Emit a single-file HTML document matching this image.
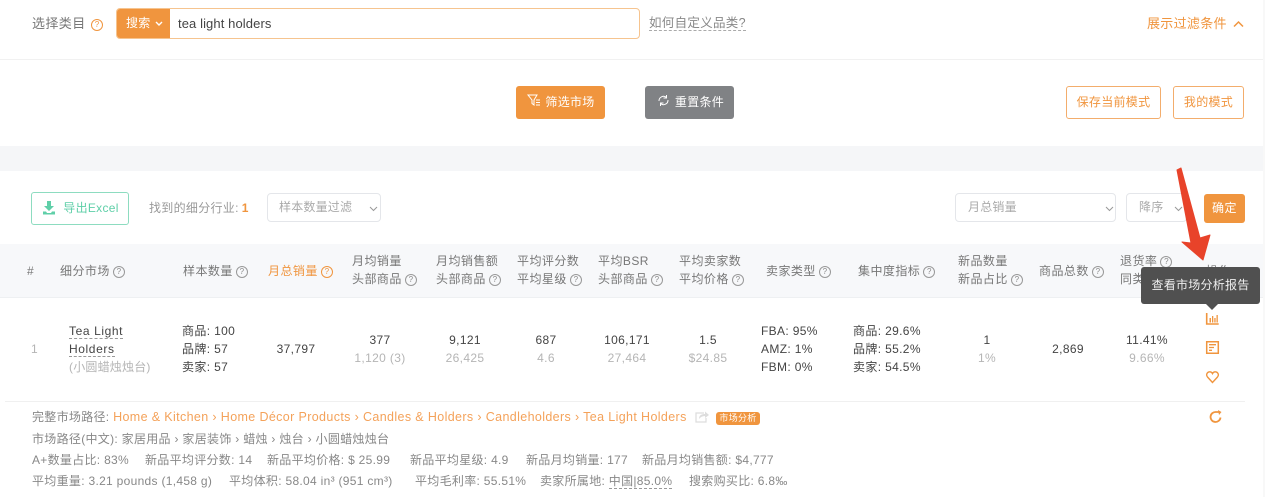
<!DOCTYPE html>
<html lang="zh"><head><meta charset="utf-8"><title>市场</title>
<style>
html,body{margin:0;padding:0;background:#fff}
#p{position:relative;width:1265px;height:497px;overflow:hidden;background:#fff;font-family:"Liberation Sans","Noto Sans CJK SC",sans-serif;font-size:12px;color:#666;filter:blur(.35px)}
#p div,#p span.a{position:absolute;white-space:nowrap;box-sizing:border-box}
.t{line-height:18px;height:18px}
.c{text-align:center;transform:translateX(-50%)}
.h{color:#777;letter-spacing:.45px}
.d{color:#444;letter-spacing:.35px}
.g{color:#b5b5b5;letter-spacing:.35px}
.m{color:#888;letter-spacing:.3px}
.o{color:#f0953e}
.q{display:inline-block;width:10px;height:10px;border:1px solid #999;border-radius:50%;font-size:8px;line-height:10px;text-align:center;color:#888;margin-left:3px;vertical-align:1px;letter-spacing:0;box-sizing:content-box}
.q.y{border-color:#f0953e;color:#f0953e}
.btn{border-radius:3px;text-align:center}
.sel{border:1px solid #e4e6ea;border-radius:4px;height:29px;line-height:27px;color:#aaa;background:#fff;padding-left:12px;letter-spacing:.2px}
.dash{border-bottom:1px dashed #999}
svg{position:absolute;overflow:visible}
</style></head><body><div id="p">
<div style="left:0;top:59px;width:1263px;height:1px;background:#f1f1f1"></div>
<div style="left:1263px;top:0;width:2px;height:497px;background:#f8f8f8"></div>
<div style="left:0;top:146px;width:1263px;height:25px;background:#f5f6f8"></div>
<div style="left:0;top:244px;width:1263px;height:54px;background:#f7f8fa;border-bottom:1px solid #eef0f2"></div>
<div style="left:5px;top:401px;width:1240px;height:1px;background:#f0f0f0"></div>

<div class="t" style="left:32px;top:15px;color:#777;font-size:13px;letter-spacing:.4px">选择类目</div>
<div class="t" style="left:91px;top:15px"><span class="q y" style="margin:0">?</span></div>
<div style="left:116px;top:8px;width:524px;height:31px;border:1px solid #f6c48f;border-radius:4px;background:#fff"></div>
<div style="left:117px;top:9px;width:53px;height:29px;background:#f0953e;border-radius:3px 0 0 3px;color:#fff;line-height:28px;padding-left:9px;font-size:12px;letter-spacing:.3px">搜索</div>
<svg style="left:155px;top:21px" width="8" height="6"><path d="M1 1l3 3 3-3" fill="none" stroke="#fff" stroke-width="1.4"/></svg>
<div class="t" style="left:178px;top:15px;color:#444;font-size:13px;letter-spacing:.1px">tea light holders</div>
<div style="left:649px;top:15px;height:16px;line-height:16px;color:#888;font-size:12.5px;letter-spacing:.3px;border-bottom:1px dashed #aaa">如何自定义品类?</div>
<div class="t o" style="left:1147px;top:15px;font-size:13px;letter-spacing:.3px">展示过滤条件</div>
<svg style="left:1233px;top:20px" width="11" height="8"><path d="M1 6.500l4.500-4.500 4.500 4.500" fill="none" stroke="#f0953e" stroke-width="1.5"/></svg>

<div class="btn" style="left:516px;top:86px;width:89px;height:33px;background:#f0953e;color:#fff;line-height:32px;padding-left:19px;font-size:12px;letter-spacing:.3px">筛选市场</div>
<svg style="left:527px;top:94px" width="15" height="13"><path d="M1 1h9L7 6v5L5 9.500V6zM9 6h4M9 8.500h4M9 11h4" fill="none" stroke="#fff" stroke-width="1"/></svg>
<div class="btn" style="left:645px;top:86px;width:89px;height:33px;background:#808285;color:#fff;line-height:32px;padding-left:20px;font-size:12px;letter-spacing:.3px">重置条件</div>
<svg style="left:657px;top:94px" width="13" height="13"><path d="M2 7a4.500 4.500 0 0 1 7.500-3.500M11 6a4.500 4.500 0 0 1-7.500 3.500M9.500 1v3h-3M3.500 12V9h3" fill="none" stroke="#fff" stroke-width="1"/></svg>
<div class="btn o" style="left:1066px;top:86px;width:95px;height:33px;border:1px solid #f3ad6c;line-height:31px;letter-spacing:.3px">保存当前模式</div>
<div class="btn o" style="left:1173px;top:86px;width:71px;height:33px;border:1px solid #f3ad6c;line-height:31px;letter-spacing:.3px">我的模式</div>

<div class="btn" style="left:31px;top:192px;width:98px;height:33px;border:1px solid #8ddcc0;color:#5fcfa8;line-height:31px;padding-left:22px;letter-spacing:.3px">导出Excel</div>
<svg style="left:42px;top:201px" width="14" height="14"><path d="M5 0h4v5h3L7 10 2 5h3zM1 10.500v3h12v-3h-3l-1 1.500H5l-1-1.500z" fill="#5fcfa8"/></svg>
<div class="t" style="left:149px;top:199px;color:#999;letter-spacing:.3px">找到的细分行业:<span class="o" style="font-weight:bold;margin-left:3px">1</span></div>
<div class="sel" style="left:267px;top:193px;width:114px;padding-left:11px">样本数量过滤</div>
<svg style="left:369px;top:206px" width="9" height="6"><path d="M1 1l3.500 3.500L8 1" fill="none" stroke="#999"/></svg>
<div class="sel" style="left:955px;top:193px;width:161px">月总销量</div>
<svg style="left:1105px;top:206px" width="9" height="6"><path d="M1 1l3.500 3.500L8 1" fill="none" stroke="#999"/></svg>
<div class="sel" style="left:1126px;top:193px;width:61px">降序</div>
<svg style="left:1174px;top:206px" width="9" height="6"><path d="M1 1l3.500 3.500L8 1" fill="none" stroke="#999"/></svg>
<div class="btn" style="left:1204px;top:194px;width:41px;height:29px;background:#f0953e;color:#fff;line-height:28px;letter-spacing:.5px">确定</div>

<!-- header -->
<div class="t h" style="left:27px;top:262px">#</div>
<div class="t h" style="left:60px;top:262px">细分市场<span class="q">?</span></div>
<div class="t h" style="left:183px;top:262px">样本数量<span class="q">?</span></div>
<div class="t o" style="left:268px;top:262px;letter-spacing:.45px">月总销量<span class="q y">?</span></div>
<div class="t h" style="left:352px;top:252px">月均销量</div>
<div class="t h" style="left:352px;top:270px">头部商品<span class="q">?</span></div>
<div class="t h" style="left:436px;top:252px">月均销售额</div>
<div class="t h" style="left:436px;top:270px">头部商品<span class="q">?</span></div>
<div class="t h" style="left:517px;top:252px">平均评分数</div>
<div class="t h" style="left:517px;top:270px">平均星级<span class="q">?</span></div>
<div class="t h" style="left:598px;top:252px">平均BSR</div>
<div class="t h" style="left:598px;top:270px">头部商品<span class="q">?</span></div>
<div class="t h" style="left:679px;top:252px">平均卖家数</div>
<div class="t h" style="left:679px;top:270px">平均价格<span class="q">?</span></div>
<div class="t h" style="left:766px;top:262px">卖家类型<span class="q">?</span></div>
<div class="t h" style="left:858px;top:262px">集中度指标<span class="q">?</span></div>
<div class="t h" style="left:958px;top:252px">新品数量</div>
<div class="t h" style="left:958px;top:270px">新品占比<span class="q">?</span></div>
<div class="t h" style="left:1039px;top:262px">商品总数<span class="q">?</span></div>
<div class="t h" style="left:1120px;top:252px">退货率<span class="q">?</span></div>
<div class="t h" style="left:1120px;top:270px">同类目均值</div>
<div class="t h" style="left:1206px;top:262px">操作</div>

<!-- row -->
<div class="t g" style="left:31px;top:340px">1</div>
<div class="d" style="left:69px;top:323px;height:16px;line-height:16px;border-bottom:1px dashed #999;font-size:12px;letter-spacing:.6px">Tea Light</div>
<div class="d" style="left:69px;top:341px;height:16px;line-height:16px;border-bottom:1px dashed #999;font-size:12px;letter-spacing:.6px">Holders</div>
<div class="t g" style="left:69px;top:358px;letter-spacing:.2px">(小圆蜡烛烛台)</div>
<div class="t d" style="left:182px;top:322px">商品: 100</div>
<div class="t d" style="left:182px;top:340px">品牌: 57</div>
<div class="t d" style="left:182px;top:358px">卖家: 57</div>
<div class="t d c" style="left:296px;top:340px">37,797</div>
<div class="t d c" style="left:380px;top:331px">377</div>
<div class="t g c" style="left:380px;top:349px">1,120 (3)</div>
<div class="t d c" style="left:465px;top:331px">9,121</div>
<div class="t g c" style="left:465px;top:349px">26,425</div>
<div class="t d c" style="left:546px;top:331px">687</div>
<div class="t g c" style="left:546px;top:349px">4.6</div>
<div class="t d c" style="left:627px;top:331px">106,171</div>
<div class="t g c" style="left:627px;top:349px">27,464</div>
<div class="t d c" style="left:708px;top:331px">1.5</div>
<div class="t g c" style="left:708px;top:349px">$24.85</div>
<div class="t d" style="left:761px;top:322px">FBA: 95%</div>
<div class="t d" style="left:761px;top:340px">AMZ: 1%</div>
<div class="t d" style="left:761px;top:358px">FBM: 0%</div>
<div class="t d" style="left:853px;top:322px">商品: 29.6%</div>
<div class="t d" style="left:853px;top:340px">品牌: 55.2%</div>
<div class="t d" style="left:853px;top:358px">卖家: 54.5%</div>
<div class="t d c" style="left:987px;top:331px">1</div>
<div class="t g c" style="left:987px;top:349px">1%</div>
<div class="t d c" style="left:1068px;top:340px">2,869</div>
<div class="t d c" style="left:1147px;top:331px">11.41%</div>
<div class="t g c" style="left:1147px;top:349px">9.66%</div>

<!-- action icons -->
<svg style="left:1206px;top:312px" width="13" height="13"><path d="M.7 1v11h12" fill="none" stroke="#f0953e" stroke-width="1.600"/><path d="M3.500 6h1.500v4.500H3.500zM6 4h1.300v6.500H6zM8.300 6h1.300v4.500H8.300zM10.500 3h1.300v7.500h-1.300z" fill="#f0953e"/></svg>
<svg style="left:1206px;top:341px" width="13" height="13"><path d="M.7.700h11.600v11.600H.7z" fill="none" stroke="#f0953e" stroke-width="1.500"/><path d="M3 3.700h7M3 6.500h5M3 9.300h3" stroke="#f0953e" stroke-width="1.300"/></svg>
<svg style="left:1206px;top:371px" width="13" height="12"><path d="M6.500 11.500L1.500 6C-.5 3.500 1.500.800 3.700.800c1.300 0 2.300.7 2.800 1.700.5-1 1.500-1.700 2.800-1.700 2.200 0 4.200 2.700 2.200 5.200z" fill="none" stroke="#f0953e" stroke-width="1.400"/></svg>
<svg style="left:1209px;top:410px" width="14" height="14"><path d="M11.500 7.500A5 5 0 1 1 7 2h4" fill="none" stroke="#f0953e" stroke-width="1.800"/><path d="M9 0l3.500 2L10 5z" fill="#f0953e"/></svg>

<!-- footer details -->
<div class="t m" style="left:32px;top:408px">完整市场路径: <span style="color:#f4a25a;letter-spacing:.37px;font-size:12.500px">Home &amp; Kitchen › Home Décor Products › Candles &amp; Holders › Candleholders › Tea Light Holders</span></div>
<svg style="left:695px;top:410px" width="14" height="13"><path d="M9 3H1v9h10V8" fill="none" stroke="#ddd" stroke-width="1.200"/><path d="M4 9c0-4 3-5 6-5V1.500l4 3.500-4 3V6C7.500 6 5.500 7 4 9z" fill="#ddd"/></svg>
<div style="left:716px;top:412px;width:44px;height:13px;background:#f0953e;border-radius:3px;color:#fff;font-size:9px;line-height:13px;text-align:center;letter-spacing:.3px">市场分析</div>
<div class="t m" style="left:32px;top:430px">市场路径(中文): 家居用品 › 家居装饰 › 蜡烛 › 烛台 › 小圆蜡烛烛台</div>
<div class="t m" style="left:32px;top:451px">A+数量占比: 83%</div>
<div class="t m" style="left:145px;top:451px">新品平均评分数: 14</div>
<div class="t m" style="left:267px;top:451px">新品平均价格: $ 25.99</div>
<div class="t m" style="left:410px;top:451px">新品平均星级: 4.9</div>
<div class="t m" style="left:526px;top:451px">新品月均销量: 177</div>
<div class="t m" style="left:642px;top:451px">新品月均销售额: $4,777</div>
<div class="t m" style="left:32px;top:472px">平均重量: 3.21 pounds (1,458 g)</div>
<div class="t m" style="left:229px;top:472px">平均体积: 58.04 in³ (951 cm³)</div>
<div class="t m" style="left:415px;top:472px">平均毛利率: 55.51%</div>
<div class="t m" style="left:540px;top:472px">卖家所属地: <span class="dash">中国|85.0%</span></div>
<div class="t m" style="left:689px;top:472px">搜索购买比: 6.8‰</div>

<!-- tooltip -->
<div style="left:1141px;top:267px;width:119px;height:37px;background:#505050;border-radius:3px;color:#eee;line-height:36px;text-align:center;font-size:12px;letter-spacing:.25px">查看市场分析报告</div>
<svg style="left:1206px;top:304px" width="12" height="6"><path d="M0 0h12L6 6z" fill="#505050"/></svg>

<!-- arrow -->
<svg style="left:1170px;top:165px" width="50" height="100"><path d="M7 5L11 3 30 73 40 70 33 95 12 77 21 78z" fill="#e8432a" stroke="#e8432a" stroke-linejoin="round"/></svg>
</div></body></html>
